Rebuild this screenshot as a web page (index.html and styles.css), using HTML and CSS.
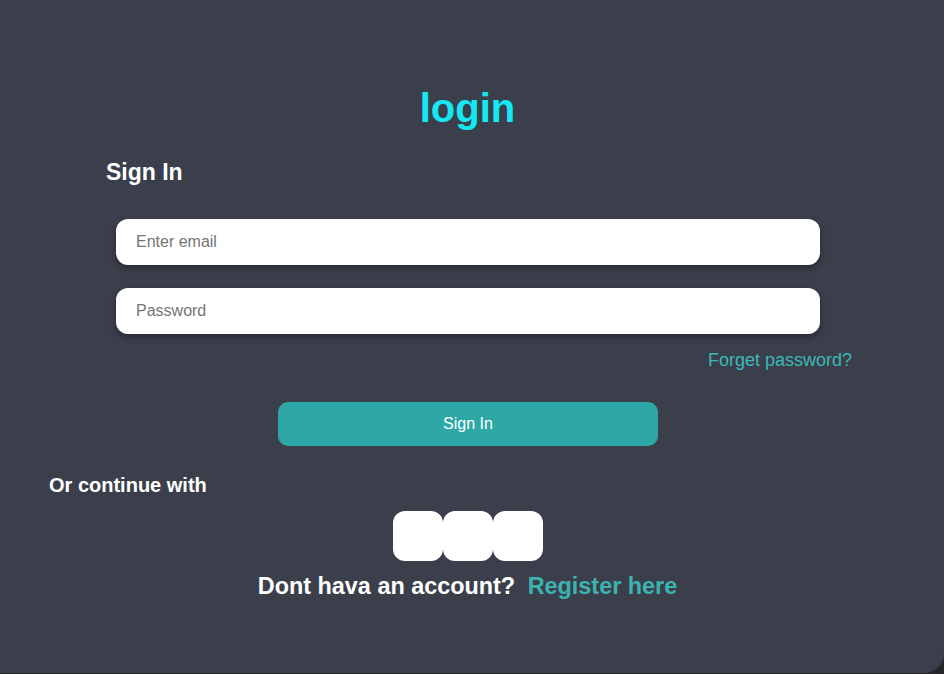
FILE: index.html
```html
<!DOCTYPE html>
<html lang="en">
<head>
    <meta charset="UTF-8">
    <meta name="viewport" content="width=device-width, initial-scale=1.0">
    <title>login</title>
    <link rel="stylesheet" href="styles.css">
</head>
<body>

    <div class="loginBox">
        <h1 class="title">login</h1>
        <h2 class="subTitle">Sign In</h2>

        <form class="loginForm" onsubmit="return false">
            <input type="email" class="field" placeholder="Enter email">
            <input type="password" class="field" placeholder="Password">
            <div class="forget">
                <a href="#">Forget password?</a>
            </div>
            <button type="submit" class="submitBtn">Sign In</button>
        </form>

        <div class="other">Or continue with</div>
        <div class="social">
            <div class="socialBtn"></div>
            <div class="socialBtn"></div>
            <div class="socialBtn"></div>
        </div>

        <div class="register">
            Dont hava an account? <a href="#">Register here</a>
        </div>
    </div>

</body>
</html>
```

FILE: styles.css
```css
html {
    background-color: #26272b;
}
body {
    margin: 0;
    font-family: "Liberation Sans", Arial, sans-serif;
}
.loginBox {
    width: 944px;
    height: 673px;
    box-sizing: border-box;
    padding-top: 84px;
    background: #3b3f4b;
    border-radius: 0 0 20px 0;
    display: flex;
    flex-direction: column;
}
.loginBox .title {
    margin: 0;
    padding-right: 9px;
    font-size: 40px;
    line-height: 48px;
    text-align: center;
    color: #14e9f3;
}
.loginBox .subTitle {
    margin: 26px 0 0 106px;
    font-size: 23px;
    line-height: 28px;
    color: #ffffff;
}
.loginForm {
    display: flex;
    flex-direction: column;
    margin-top: 33px;
}
.loginForm .field {
    width: 704px;
    height: 46px;
    margin-left: 116px;
    box-sizing: border-box;
    padding: 0 20px;
    border: none;
    border-radius: 12px;
    background: #ffffff;
    box-shadow: 0 3px 6px rgba(0, 0, 0, .35);
    font-family: inherit;
    font-size: 16px;
    color: #333;
}
.loginForm .field + .field {
    margin-top: 23px;
}
.loginForm .field::placeholder {
    color: #757575;
}
.loginForm .field:focus {
    outline: none;
}
.forget {
    margin-top: 15px;
    padding-right: 92px;
    text-align: right;
    line-height: 22px;
}
.forget a {
    font-size: 18px;
    color: #3bb9b8;
    text-decoration: none;
}
.submitBtn {
    width: 380px;
    height: 44px;
    margin: 30px 0 0 278px;
    border: none;
    border-radius: 10px;
    background: #2da8a6;
    color: #ffffff;
    font-family: inherit;
    font-size: 16px;
}
.other {
    margin: 27px 0 0 49px;
    font-size: 20px;
    line-height: 24px;
    font-weight: bold;
    color: #ffffff;
}
.social {
    display: flex;
    justify-content: center;
    margin-top: 14px;
    padding-right: 9px;
}
.socialBtn {
    width: 50px;
    height: 50px;
    border-radius: 12px;
    background: #ffffff;
}
.register {
    margin-top: 11px;
    padding-right: 9px;
    text-align: center;
    font-size: 23.4px;
    line-height: 28px;
    font-weight: bold;
    color: #ffffff;
}
.register a {
    margin-left: 6px;
    color: #3bb3b0;
    text-decoration: none;
}
```
